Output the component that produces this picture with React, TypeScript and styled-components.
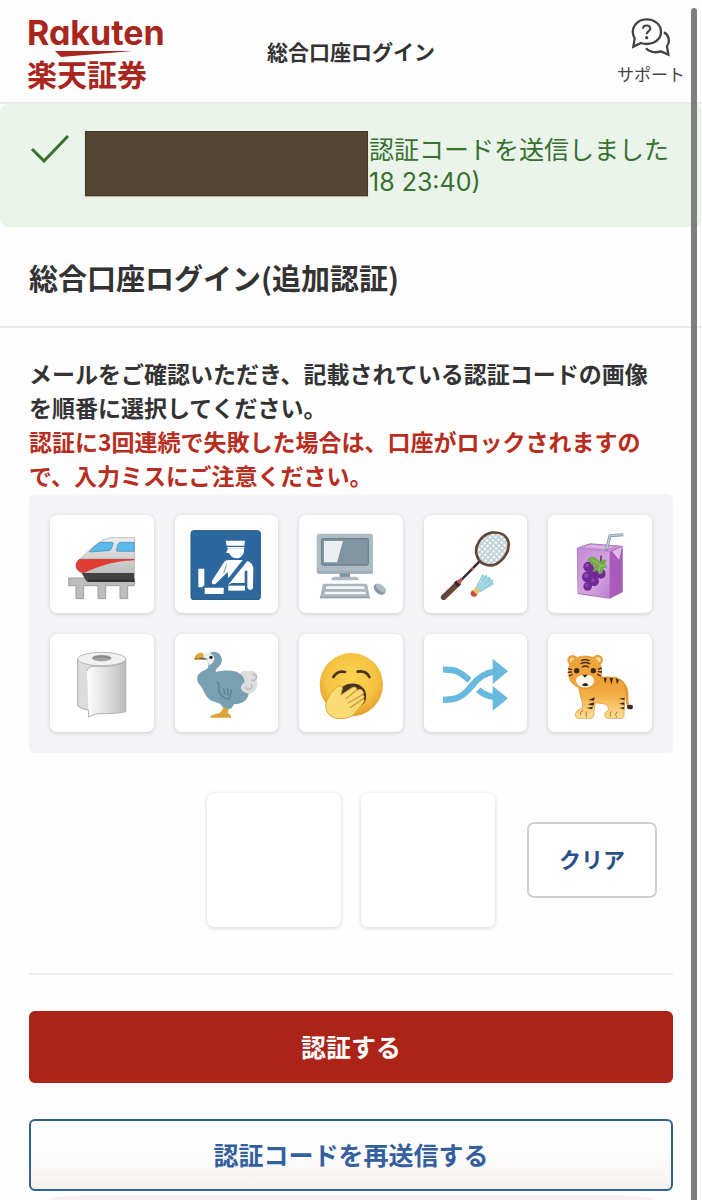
import React from 'react';
import styled, { createGlobalStyle } from 'styled-components';

const GlobalStyle = createGlobalStyle`
  *, *::before, *::after { box-sizing: border-box; }
  body {
    margin: 0;
    background: #fff;
    color: #333;
    font-family: 'Noto Sans CJK JP', sans-serif;
  }
  h1, p { margin: 0; }
  button { font-family: inherit; cursor: pointer; }
`;

const Page = styled.div`
  display: flex;
  flex-direction: column;
  background: #fefefe;
`;

const Header = styled.header`
  display: grid;
  grid-template-columns: 1fr auto 1fr;
  align-items: center;
  height: 104px;
  padding: 0 17px;
  border-bottom: 2px solid #e9e9e9;
`;

const Logo = styled.a`
  display: flex;
  flex-direction: column;
  justify-self: start;
  margin-left: 10px;
  padding-top: 1px;
  color: #a8261d;
  text-decoration: none;
  font-weight: 700;
`;

const LogoName = styled.span`
  font-family: Inter, sans-serif;
  font-size: 34px;
  line-height: 34px;
  font-feature-settings: 'cv11';
`;

const LogoStroke = styled.svg`
  display: block;
  width: 78px;
  height: 8px;
  margin-left: 28px;
`;

const LogoCompany = styled.span`
  font-size: 30px;
  line-height: 30px;
`;

const HeaderTitle = styled.span`
  font-size: 21px;
  line-height: 32px;
  font-weight: 700;
`;

const Support = styled.a`
  display: flex;
  flex-direction: column;
  align-items: center;
  justify-self: end;
  gap: 5px;
  color: #444;
  font-size: 17px;
  line-height: 24px;
  text-decoration: none;
  svg { width: 40px; height: 40px; }
`;

const Notice = styled.div`
  display: flex;
  align-items: flex-start;
  height: 123px;
  padding: 27px 16px 0 30px;
  border-radius: 8px;
  background: #eaf4ea;
  color: #37702f;
`;

const NoticeCheck = styled.svg`
  flex: none;
  width: 40px;
  height: 32px;
  margin-right: 15px;
`;

const Redaction = styled.span`
  flex: none;
  width: 283px;
  height: 65px;
  border: 1px solid #40372a;
  background: #534633;
  box-shadow: 0 1px 1px #c9b8a4;
`;

const NoticeText = styled.p`
  padding: 3px 0 0 1px;
  font-family: Inter, 'Noto Sans CJK JP', sans-serif;
  font-size: 25px;
  line-height: 32px;
  font-weight: 400;
  white-space: nowrap;
`;

const PageTitle = styled.h1`
  padding: 29px 29px 27px;
  border-bottom: 2px solid #e9e9e9;
  font-size: 29px;
  line-height: 43px;
  font-weight: 700;
`;

const Content = styled.main`
  padding: 28px 29px 9px;
`;

const Guide = styled.p<{ $warning?: boolean }>`
  padding-right: 20px;
  color: ${(p) => (p.$warning ? '#b82d20' : '#333')};
  font-size: 23px;
  line-height: 34px;
  font-weight: 700;
`;

const Choices = styled.div`
  display: grid;
  grid-template-columns: repeat(5, 1fr);
  gap: 21px;
  margin-top: 2px;
  padding: 21px;
  border-radius: 6px;
  background: #f4f4f6;
`;

const Choice = styled.button`
  display: flex;
  align-items: center;
  justify-content: center;
  height: 98px;
  padding: 0;
  border: 0;
  border-radius: 7px;
  background: #fff;
  box-shadow: 0 1px 4px rgba(0, 0, 0, 0.16);
  svg { width: 72px; height: 72px; }
`;

const Answer = styled.div`
  display: flex;
  align-items: center;
  justify-content: flex-end;
  gap: 20px;
  margin-top: 40px;
  padding: 0 16px 46px 0;
  border-bottom: 2px solid #ececec;
`;

const Slot = styled.div`
  width: 134px;
  height: 134px;
  border-radius: 7px;
  background: #fff;
  box-shadow: 0 1px 4px rgba(0, 0, 0, 0.17);
`;

const ClearButton = styled.button`
  width: 130px;
  height: 76px;
  margin-left: 12px;
  padding: 0 0 4px;
  border: 2px solid #cfcfcf;
  border-radius: 7px;
  background: #fff;
  color: #27508c;
  font-size: 22px;
  font-weight: 700;
`;

const WideButton = styled.button<{ $primary?: boolean }>`
  display: block;
  width: 100%;
  height: 72px;
  margin-top: 36px;
  padding: 0 0 2px;
  border: ${(p) => (p.$primary ? '0' : '2px solid #315f96')};
  border-radius: 6px;
  background: ${(p) => (p.$primary ? '#ac2318' : 'linear-gradient(#fefefe 40%, #f7f1f1)')};
  color: ${(p) => (p.$primary ? '#fff' : '#335f9f')};
  font-size: 25px;
  font-weight: 700;
`;

const ScrollThumb = styled.div`
  position: fixed;
  top: 8px;
  right: 5px;
  bottom: 0;
  width: 6px;
  border-radius: 3px 3px 0 0;
  background: #7f7f7f;
`;

const BrowserBar = styled.div`
  position: fixed;
  right: 48px;
  bottom: 0;
  left: 48px;
  height: 7px;
  border-top: 2px solid #fff;
  border-radius: 50px 50px 0 0 / 7px 7px 0 0;
  background: #fbeef2;
`;

const Train = () => (
  <svg viewBox="78 71 216 216" aria-hidden="true">
    <defs>
      <linearGradient id="trainBody" x1="0" y1="0" x2="0" y2="1">
        <stop offset="0" stopColor="#eeeeee" />
        <stop offset="1" stopColor="#bdbdbd" />
      </linearGradient>
    </defs>
    <path d="M86 221H283V244H263V283H240V244H197V283H174V244H131V283H108V244H86Z" fill="#bdbdbd" stroke="#9e9e9e" strokeWidth="3" />
    <path d="M283 100H213C190 102 160 125 140 145L112 172C103 185 108 198 125 207H283Z" fill="url(#trainBody)" stroke="#a8a8a8" strokeWidth="2" />
    <path d="M117 165H283V168C225 169 173 187 132 206C111 204 102 187 111 171Z" fill="#df3d36" />
    <path d="M117 165H283" stroke="#b73431" strokeWidth="2" />
    <path d="M180 114H216Q221 114 219 120L214 133Q211 139 204 139L148 143Q160 127 180 114Z" fill="#5ab9ed" stroke="#4487aa" strokeWidth="2" />
    <path d="M283 114H242Q236 114 234 120L229 136Q228 141 234 141H283Z" fill="#5ab9ed" stroke="#4487aa" strokeWidth="2" />
    <path d="M125 206H283V233H147Q140 233 137 227Z" fill="#424242" />
    <path d="M143 229H283" stroke="#303030" strokeWidth="6" />
  </svg>
);

const Customs = () => (
  <svg viewBox="453 71 216 216" aria-hidden="true">
    <rect x="456" y="79" width="208" height="207" rx="8" fill="#2d679d" stroke="#245783" strokeWidth="3" />
    <g fill="#fff">
      <path d="M560 109H618L616 124H563Z" />
      <path d="M563 128H616V132H566Z" />
      <path d="M568 132H615V142C612 155 602 162 592 162C580 161 573 154 571 147L561 145Z" />
      <path d="M556 172Q560 167 568 167H611L568 222L566 203L533 235Q526 243 520 238Q516 235 521 226Z" />
      <path d="M625 170Q640 174 643 191L642 250Q640 257 633 257Q625 256 625 249V199H617V236H578L567 242Z" />
      <rect x="568" y="244" width="50" height="15" />
      <path d="M478 193H496V244H491V249H478Z" />
      <rect x="497" y="250" width="57" height="19" rx="2" />
    </g>
    <path d="M563 180L554 207" stroke="#2d679d" strokeWidth="2" />
  </svg>
);

const Computer = () => (
  <svg viewBox="75 71 216 216" aria-hidden="true">
    <rect x="80" y="88" width="169" height="120" rx="7" fill="#aebbc2" />
    <path d="M80 199H249V202Q249 208 242 208H87Q80 208 80 202Z" fill="#9fafb8" />
    <rect x="95" y="103" width="140" height="79" rx="5" fill="#8295a2" stroke="#6d828f" strokeWidth="4" />
    <path d="M102 110H159L141 174H102Z" fill="#eceff1" />
    <rect x="149" y="207" width="31" height="13" fill="#7f929f" />
    <path d="M123 228Q124 217 135 217H195Q206 217 207 228Z" fill="#aebbc2" />
    <path d="M103 238H227Q231 238 232 242L240 281H90L98 242Q99 238 103 238Z" fill="#a9b7bf" />
    <path d="M90 277H240V282H90Z" fill="#8fa1ac" />
    <path d="M110 246H222L224 254H107ZM105 262H226L228 270H103Z" fill="#f5f7f8" />
    <ellipse cx="269" cy="255" rx="20" ry="13" transform="rotate(40 269 255)" fill="#8195a2" />
    <ellipse cx="273" cy="251" rx="18" ry="9" transform="rotate(40 273 251)" fill="#aebcc4" />
  </svg>
);

const Badminton = () => (
  <svg viewBox="450 71 216 216" aria-hidden="true">
    <defs>
      <pattern id="strings" width="12" height="12" patternUnits="userSpaceOnUse" patternTransform="rotate(42)">
        <rect width="12" height="12" fill="#fff" />
        <path d="M0 0H12M0 0V12" stroke="#b5ccd2" strokeWidth="9" />
      </pattern>
    </defs>
    <path d="M568 172L515 226" stroke="#2d2730" strokeWidth="7" />
    <path d="M550 190L544 196" stroke="#bd4840" strokeWidth="7" />
    <path d="M503 238L461 279" stroke="#624638" strokeWidth="17" strokeLinecap="round" />
    <path d="M506 234L498 242" stroke="#332d30" strokeWidth="18" />
    <path d="M500 231L513 220L519 227L509 240Z" fill="#c54e43" />
    <path d="M560 152C552 124 575 91 604 85C630 82 651 92 656 116C658 147 634 177 607 183C584 184 566 174 560 152Z" fill="url(#strings)" stroke="#624638" strokeWidth="8" />
    <path d="M578 208L583 214L590 211L592 219L600 217L602 225L610 228L608 235L613 239L570 264L556 250Z" fill="#94cedb" />
    <path d="M580 218L562 250M592 221L565 253M604 230L569 257M568 230L585 247" stroke="#dceff1" strokeWidth="2" />
    <path d="M557 249L570 262L562 270L549 258Z" fill="#efc35b" />
    <path d="M548 258L562 271C558 279 544 280 542 270C541 264 544 260 548 258Z" fill="#c54e43" />
  </svg>
);

const JuiceBox = () => (
  <svg viewBox="102 71 216 216" aria-hidden="true">
    <defs>
      <linearGradient id="juiceFront" x1="0" y1="0" x2="1" y2="1">
        <stop offset="0" stopColor="#c58bd5" />
        <stop offset=".6" stopColor="#d3a5df" />
        <stop offset="1" stopColor="#bd7dce" />
      </linearGradient>
    </defs>
    <path d="M142 131L180 118L277 126V263L239 282L144 268Z" fill="#a85bbc" stroke="#9654a5" strokeWidth="2" />
    <path d="M142 131L239 142V281L144 267Z" fill="url(#juiceFront)" />
    <path d="M142 131L180 119L276 126L239 142Z" fill="#c78ed6" />
    <path d="M159 128L184 121L252 127L230 135Z" fill="#dab4e3" />
    <path d="M245 142L276 127L267 169Z" fill="#dfbde7" />
    <path d="M246 143L267 169" stroke="#8c4aa0" strokeWidth="3" />
    <path d="M229 138L240 94L280 91" fill="none" stroke="#8298a4" strokeWidth="9" strokeLinejoin="round" />
    <path d="M230 134L240 94L279 91" fill="none" stroke="#c4d0d7" strokeWidth="4" />
    <g fill="#702a94">
      <circle cx="175" cy="187" r="15" /><circle cx="194" cy="205" r="17" />
      <circle cx="212" cy="208" r="15" /><circle cx="173" cy="218" r="17" />
      <circle cx="192" cy="231" r="15" /><circle cx="173" cy="246" r="13" />
    </g>
    <g fill="#8b44ad">
      <circle cx="171" cy="183" r="6" /><circle cx="168" cy="214" r="7" />
      <circle cx="189" cy="228" r="6" /><circle cx="170" cy="242" r="5" />
    </g>
    <path d="M211 176L214 154" stroke="#694046" strokeWidth="5" />
    <path d="M171 168Q181 154 193 158L202 165L209 174L218 165L230 168L225 178L232 192L221 190L217 207L207 210L201 198L188 204L194 185L183 180L178 170Z" fill="#75a84b" />
    <path d="M184 165L211 182L224 185M211 182L208 201" fill="none" stroke="#a3c96d" strokeWidth="3" />
  </svg>
);

const ToiletPaper = () => (
  <svg viewBox="78 67 216 216" aria-hidden="true">
    <defs>
      <linearGradient id="paperSheet">
        <stop offset="0" stopColor="#fcfcfc" />
        <stop offset=".4" stopColor="#e6e6e6" />
        <stop offset=".8" stopColor="#c9c9c9" />
        <stop offset="1" stopColor="#b9b9b9" />
      </linearGradient>
    </defs>
    <path d="M113 102V244Q120 253 145 256L257 261V102Z" fill="#dcdcdc" stroke="#aaa" strokeWidth="3" />
    <ellipse cx="185" cy="103" rx="72" ry="20" fill="#f1f1f1" stroke="#b8b8b8" strokeWidth="3" />
    <ellipse cx="185" cy="100" rx="29" ry="9" fill="#858585" stroke="#bcbcbc" strokeWidth="2" />
    <path d="M157 102Q174 94 212 102Q190 112 157 102Z" fill="#a3a3a3" />
    <path d="M141 139Q143 124 166 125Q235 128 257 109V261Q241 266 194 267Q164 265 146 277Z" fill="url(#paperSheet)" />
    <path d="M141 139Q143 124 166 125Q235 128 257 109V261Q241 266 194 267Q164 265 146 277L145 257" fill="none" stroke="#b2b2b2" strokeWidth="3" />
  </svg>
);

const Dodo = () => (
  <svg viewBox="453 67 216 216" aria-hidden="true">
    <path d="M553 246L571 250L566 264L576 273V279H514Q514 272 523 270L543 264L550 256Z" fill="#dca33c" />
    <path d="M605 143Q612 136 626 140Q643 134 652 145Q660 153 652 165Q658 173 654 187Q649 202 638 205Q622 213 608 199Z" fill="#dedede" />
    <path d="M639 150A9 9 0 1 1 637 165M637 178Q642 196 626 194Q618 191 622 185" fill="none" stroke="#b7b7b7" strokeWidth="4" />
    <path d="M507 92Q512 81 526 81C547 83 553 105 546 117C541 127 527 133 531 142C548 137 571 136 587 140C607 146 616 157 617 173Q607 177 606 191Q609 204 629 207C626 230 603 239 586 238L576 252Q560 253 551 247C542 229 520 234 509 222C494 209 496 193 480 178C466 158 480 142 497 137C516 129 506 115 503 107Z" fill="#78a0b0" />
    <path d="M490 88Q507 81 518 88C532 97 527 115 510 122Q507 108 492 104Z" fill="#e9eeee" />
    <path d="M490 84Q470 83 466 101L465 105L492 105Q497 91 490 84Z" fill="#dfa43e" />
    <path d="M474 101Q491 97 508 104L492 105Z" fill="#5b6265" />
    <path d="M466 103L472 99L475 105Z" fill="#8e6632" />
    <circle cx="516" cy="98" r="5" fill="#222" />
    <path d="M534 172Q543 175 539 192C540 211 554 221 570 224Q573 213 578 196M558 208L554 193M566 211L566 192" fill="none" stroke="#5b8192" strokeWidth="4" strokeLinecap="round" />
  </svg>
);

const Yawn = () => (
  <svg viewBox="75 67 216 216" aria-hidden="true">
    <defs>
      <radialGradient id="face" cx=".5" cy=".4" r=".6">
        <stop offset="0" stopColor="#fcd34f" />
        <stop offset=".65" stopColor="#f5c342" />
        <stop offset="1" stopColor="#e4a02d" />
      </radialGradient>
    </defs>
    <circle cx="184" cy="180" r="95" fill="url(#face)" />
    <path d="M130 157Q143 136 165 142M203 141Q228 136 238 157" fill="none" stroke="#49341f" strokeWidth="8" strokeLinecap="round" />
    <path d="M151 213C143 195 159 178 183 177C212 175 232 194 228 221Q226 238 212 243Z" fill="#49341f" />
    <path d="M110 229C118 212 130 192 147 183Q157 181 157 191L152 212L186 189Q195 184 200 191Q202 195 199 198Q212 191 218 199Q222 204 218 210Q226 214 220 222Q227 227 218 237Q205 252 193 267C181 283 139 289 118 271Q102 253 110 229Z" fill="#fbdc74" stroke="#dda53d" strokeWidth="3" />
    <path d="M168 222L199 197M174 235L218 210M181 249L220 222" fill="none" stroke="#d39b3e" strokeWidth="4" strokeLinecap="round" />
  </svg>
);

const Shuffle = () => (
  <svg viewBox="450 67 216 216" aria-hidden="true">
    <g fill="none" stroke="#68b9de" strokeWidth="19">
      <path d="M459 135C498 133 511 142 538 167" />
      <path d="M565 195Q582 212 612 217" />
      <path d="M459 225C504 228 522 211 545 184C565 157 584 145 612 141" />
    </g>
    <path d="M608 102L654 140L608 178ZM608 184L654 221L608 258Z" fill="#68b9de" />
  </svg>
);

const Tiger = () => (
  <svg viewBox="102 427 216 216" aria-hidden="true">
    <defs>
      <linearGradient id="fur" x1="0" y1="0" x2="0" y2="1">
        <stop offset="0" stopColor="#ed982e" />
        <stop offset=".5" stopColor="#f5b34a" />
        <stop offset="1" stopColor="#ffe09a" />
      </linearGradient>
    </defs>
    <path d="M273 529Q294 547 291 576Q290 603 299 606" fill="none" stroke="#e9952e" strokeWidth="8" />
    <ellipse cx="300" cy="607" rx="9" ry="7" fill="#3c291f" />
    <path d="M145 545L151 574Q159 591 158 608L139 620Q133 637 142 641H183Q193 638 192 620L196 594L225 598Q238 604 235 616L225 624Q222 637 229 641H275Q284 640 282 624L285 578Q295 530 258 518L205 516Z" fill="url(#fur)" stroke="#d39138" strokeWidth="2" />
    <path d="M159 617Q150 619 152 632M171 621Q165 628 170 637M244 620Q237 627 242 636M261 621Q253 629 260 638" fill="none" stroke="#ad7432" strokeWidth="3" />
    <path d="M221 520L226 537L230 519ZM239 519L244 540L249 520ZM257 521L261 539L267 526ZM194 578L175 586L192 588ZM193 593L173 599L190 603ZM189 606L169 610L186 614ZM284 579L267 582L283 586ZM283 593L267 597L283 601ZM283 607L267 610L282 614Z" fill="#352b1d" />
    <circle cx="128" cy="467" r="16" fill="#eda038" />
    <circle cx="203" cy="466" r="16" fill="#eda038" />
    <circle cx="128" cy="468" r="9" fill="#ffe1a0" />
    <circle cx="203" cy="467" r="9" fill="#ffe1a0" />
    <path d="M116 502C112 478 132 454 165 454C197 454 219 477 214 504C217 534 194 550 166 551C136 551 113 532 116 502Z" fill="#f0a43b" stroke="#d48e31" strokeWidth="2" />
    <path d="M165 511C144 509 135 521 140 535C148 552 181 554 190 536C197 520 184 509 165 511Z" fill="#fff9eb" />
    <path d="M155 467Q165 462 177 468M153 477Q166 470 179 477M157 487Q166 481 175 487" fill="none" stroke="#3d2c20" strokeWidth="4" strokeLinecap="round" />
    <circle cx="140" cy="498" r="8" fill="#3d2c20" />
    <circle cx="190" cy="498" r="8" fill="#3d2c20" />
    <path d="M157 510H173L165 519ZM156 542Q166 528 176 542Q165 548 156 542Z" fill="#302923" />
    <path d="M114 492L126 495M113 503L126 502M117 514L128 509M215 490L204 494M216 502L204 501M213 514L202 509" stroke="#3d2c20" strokeWidth="4" />
  </svg>
);

const choices = [
  { label: '電車', Icon: Train },
  { label: '税関', Icon: Customs },
  { label: 'パソコン', Icon: Computer },
  { label: 'バドミントン', Icon: Badminton },
  { label: 'ジュース', Icon: JuiceBox },
  { label: 'トイレットペーパー', Icon: ToiletPaper },
  { label: 'ドードー', Icon: Dodo },
  { label: 'あくび', Icon: Yawn },
  { label: 'シャッフル', Icon: Shuffle },
  { label: 'トラ', Icon: Tiger },
];

export default function App() {
  return (
    <>
      <GlobalStyle />
      <Page>
        <Header>
          <Logo href="#">
            <LogoName>Rakuten</LogoName>
            <LogoStroke viewBox="0 0 78 8" aria-hidden="true">
              <path d="M0 1H78L6 7Z" fill="#a8261d" />
            </LogoStroke>
            <LogoCompany>楽天証券</LogoCompany>
          </Logo>
          <HeaderTitle>総合口座ログイン</HeaderTitle>
          <Support href="#">
            <svg viewBox="843 55 120 120" fill="none" stroke="#444" strokeWidth="7" aria-hidden="true">
              <path d="M854 119C838 90 860 62 890 62C915 62 933 79 933 99C933 120 915 136 890 136Q881 136 873 133L850 144Z" />
              <path d="M942 101C959 112 960 130 951 143L955 168L932 158C914 164 896 159 888 149" />
              <path d="M879 90C879 77 901 77 901 90C901 98 890 97 890 107" strokeWidth="6" />
              <circle cx="890" cy="117" r="5" fill="#444" stroke="none" />
            </svg>
            サポート
          </Support>
        </Header>
        <Notice role="status">
          <NoticeCheck viewBox="0 0 40 32" fill="none" stroke="#37702f" strokeWidth="3" aria-hidden="true">
            <path d="M2 18L14 30L38 5" />
          </NoticeCheck>
          <Redaction />
          <NoticeText>
            認証コードを送信しました
            <br />
            18 23:40)
          </NoticeText>
        </Notice>
        <PageTitle>総合口座ログイン(追加認証)</PageTitle>
        <Content>
          <Guide>メールをご確認いただき、記載されている認証コードの画像を順番に選択してください。</Guide>
          <Guide $warning>認証に3回連続で失敗した場合は、口座がロックされますので、入力ミスにご注意ください。</Guide>
          <Choices>
            {choices.map(({ label, Icon }) => (
              <Choice key={label} type="button" aria-label={label}>
                <Icon />
              </Choice>
            ))}
          </Choices>
          <Answer>
            <Slot />
            <Slot />
            <ClearButton type="button">クリア</ClearButton>
          </Answer>
          <WideButton type="button" $primary>認証する</WideButton>
          <WideButton type="button">認証コードを再送信する</WideButton>
        </Content>
      </Page>
      <BrowserBar />
      <ScrollThumb />
    </>
  );
}
